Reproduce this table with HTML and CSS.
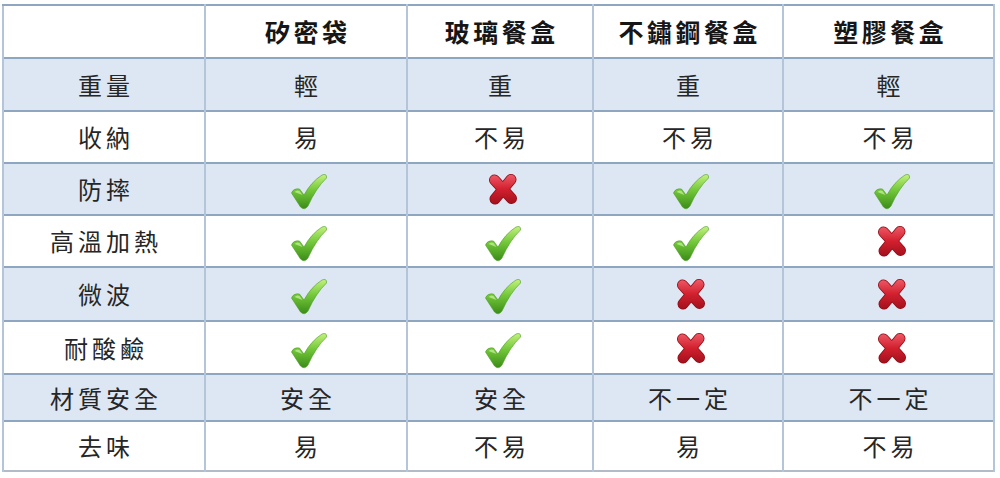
FILE: index.html
```html
<!DOCTYPE html>
<html lang="zh-Hant">
<head>
<meta charset="utf-8">
<title>餐盒比較</title>
<link rel="stylesheet" href="styles.css">
</head>
<body>
<svg class="defs" width="0" height="0" aria-hidden="true">
  <defs>
    <linearGradient id="gok" x1="0" y1="0" x2="0" y2="1">
      <stop offset="0" stop-color="#c4f27e"/>
      <stop offset="0.45" stop-color="#74c93a"/>
      <stop offset="1" stop-color="#3a8c17"/>
    </linearGradient>
    <linearGradient id="gno" x1="0" y1="0" x2="0" y2="32" gradientUnits="userSpaceOnUse">
      <stop offset="0" stop-color="#f0606c"/>
      <stop offset="0.5" stop-color="#d3202f"/>
      <stop offset="1" stop-color="#9e0f1a"/>
    </linearGradient>
    <symbol id="ok" viewBox="0 0 36 36">
      <path d="M0.5 19 Q2.5 14 8.5 15 L13 21 Q20 8 31 1 Q36 -1 35.5 4 Q25 14 17 32 Q13.5 37 9.5 33 Z" fill="url(#gok)" stroke="#4a9a22" stroke-width="0.6"/>
      <path d="M3.5 18 Q6 15.5 8.5 17 L11.5 21 Z" fill="#e6ffc4" opacity="0.55"/>
    </symbol>
    <symbol id="no" viewBox="0 0 30 32">
      <g stroke-linecap="round" fill="none">
        <line x1="6.5" y1="7" x2="23.5" y2="25.5" stroke="#8f0d17" stroke-width="11"/>
        <line x1="23" y1="6.5" x2="7" y2="26" stroke="#8f0d17" stroke-width="11"/>
        <line x1="6.5" y1="7" x2="23.5" y2="25.5" stroke="url(#gno)" stroke-width="9.4"/>
        <line x1="23" y1="6.5" x2="7" y2="26" stroke="url(#gno)" stroke-width="9.4"/>
      </g>
    </symbol>
  </defs>
</svg>
<table class="cmp">
  <colgroup>
    <col class="c0"><col class="c1"><col class="c2"><col class="c3"><col class="c4">
  </colgroup>
  <thead>
    <tr class="hd">
      <th></th><th>矽密袋</th><th>玻璃餐盒</th><th>不鏽鋼餐盒</th><th>塑膠餐盒</th>
    </tr>
  </thead>
  <tbody>
    <tr class="alt r1"><td>重量</td><td>輕</td><td>重</td><td>重</td><td>輕</td></tr>
    <tr class="r2"><td>收納</td><td>易</td><td>不易</td><td>不易</td><td>不易</td></tr>
    <tr class="alt r3"><td>防摔</td>
      <td class="ic"><svg class="iok"><use href="#ok"/></svg></td>
      <td class="ic"><svg class="ino"><use href="#no"/></svg></td>
      <td class="ic"><svg class="iok"><use href="#ok"/></svg></td>
      <td class="ic"><svg class="iok"><use href="#ok"/></svg></td></tr>
    <tr class="r4"><td>高溫加熱</td>
      <td class="ic"><svg class="iok"><use href="#ok"/></svg></td>
      <td class="ic"><svg class="iok"><use href="#ok"/></svg></td>
      <td class="ic"><svg class="iok"><use href="#ok"/></svg></td>
      <td class="ic"><svg class="ino"><use href="#no"/></svg></td></tr>
    <tr class="alt r5"><td>微波</td>
      <td class="ic"><svg class="iok"><use href="#ok"/></svg></td>
      <td class="ic"><svg class="iok"><use href="#ok"/></svg></td>
      <td class="ic"><svg class="ino"><use href="#no"/></svg></td>
      <td class="ic"><svg class="ino"><use href="#no"/></svg></td></tr>
    <tr class="r6"><td>耐酸鹼</td>
      <td class="ic"><svg class="iok"><use href="#ok"/></svg></td>
      <td class="ic"><svg class="iok"><use href="#ok"/></svg></td>
      <td class="ic"><svg class="ino"><use href="#no"/></svg></td>
      <td class="ic"><svg class="ino"><use href="#no"/></svg></td></tr>
    <tr class="alt r7"><td>材質安全</td><td>安全</td><td>安全</td><td>不一定</td><td>不一定</td></tr>
    <tr class="r8"><td>去味</td><td>易</td><td>不易</td><td>易</td><td>不易</td></tr>
  </tbody>
</table>
</body>
</html>
```
FILE: styles.css
```css
html, body {
  margin: 0;
  padding: 0;
  background: #ffffff;
}
body {
  padding: 4px 0 0 2px;
  font-family: "Noto Sans CJK TC", "Noto Sans CJK SC", sans-serif;
  color: #262626;
}
.defs {
  position: absolute;
  width: 0;
  height: 0;
  overflow: hidden;
}
.cmp {
  border-collapse: collapse;
  table-layout: fixed;
  width: 991px;
  border: 2px solid #b2bcc8;
}
.c0 { width: 202px; }
.c1 { width: 202px; }
.c2 { width: 186px; }
.c3 { width: 190px; }
.c4 { width: 211px; }

.cmp th, .cmp td {
  padding: 0 0 0 4px;
  text-align: center;
  vertical-align: middle;
  border-left: 2px solid #b4c5d9;
  border-right: 2px solid #b4c5d9;
  border-top: 2px solid #8fa6c1;
  font-size: 24px;
  letter-spacing: 4px;
  line-height: 1;
  font-weight: 400;
}
.cmp th {
  font-size: 25px;
  font-weight: 700;
  letter-spacing: 3.5px;
  padding-left: 3.5px;
  color: #161616;
  background: #ffffff;
}
.hd { height: 53px; }
.r1 { height: 53px; }
.r2, .r3, .r4 { height: 52px; }
.r5 { height: 54px; }
.r6 { height: 53px; }
.r7 { height: 47px; }
.r8 { height: 50px; }

.alt td { background: #dde7f3; }

.cmp td.ic {
  padding: 0 0 0 6px;
  line-height: 0;
}
.iok {
  width: 36px;
  height: 36px;
  display: inline-block;
  margin-top: 6px;
}
.ino {
  width: 30px;
  height: 32px;
  display: inline-block;
}
```
